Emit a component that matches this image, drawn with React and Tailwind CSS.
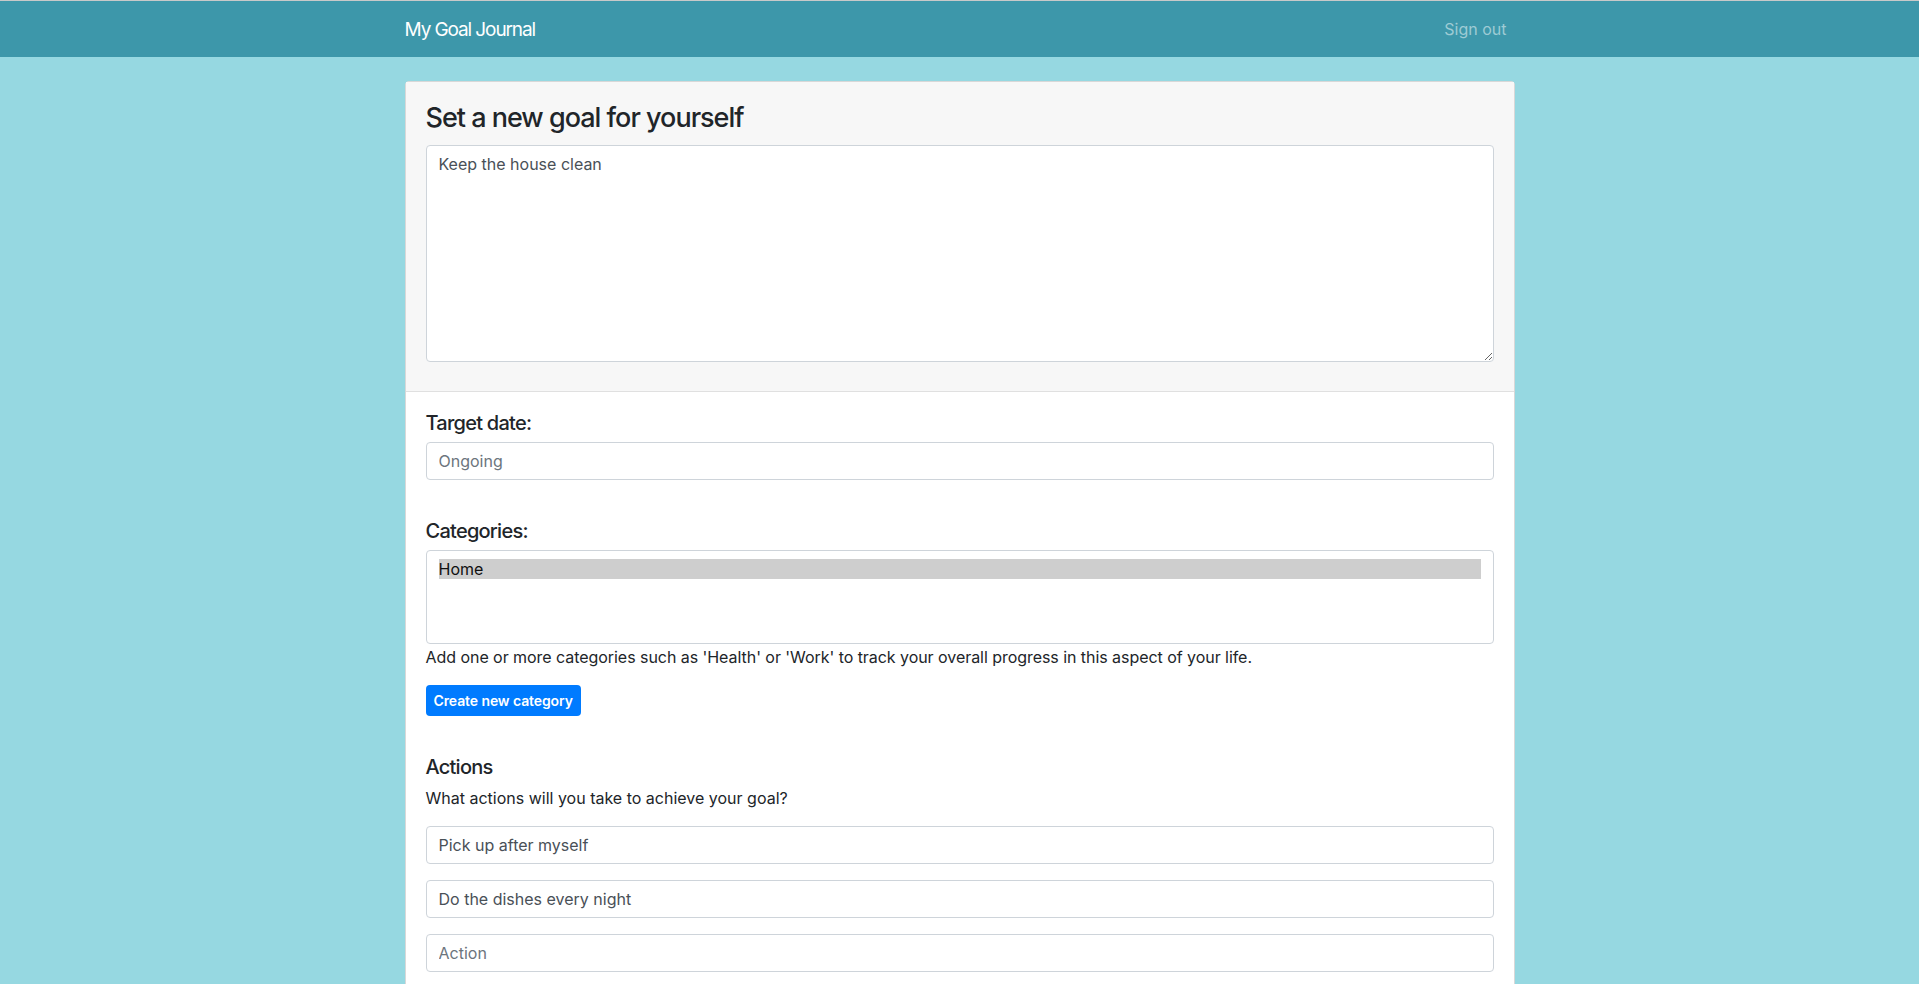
import { useState } from "react";

const FONT = { fontFamily: "Inter, 'Noto Sans', 'Liberation Sans', sans-serif" };

export default function App() {
  const [actions, setActions] = useState(["Pick up after myself", "Do the dishes every night", ""]);

  return (
    <div style={FONT} className="min-h-screen bg-[#96d8e1] text-[#212529]">
      {/* Navbar */}
      <nav className="border-t border-[#c9c9c9] bg-[#3d97aa] h-[57px]">
        <div className="w-[1110px] mx-auto h-full flex items-center justify-between">
          <span className="text-[19px] text-white tracking-[-1.1px] pt-[2px]">My Goal Journal</span>
          <span className="text-[16px] text-[#9ecbd4] pr-2">Sign out</span>
        </div>
      </nav>

      <div className="w-[1110px] mx-auto mt-[24px] bg-white border border-[#d8d8d8] rounded-[4px]">
        {/* Header */}
        <div className="bg-[#f7f7f7] border-b border-[#e0e0e0] px-5 pt-[19px] pb-[29px]">
          <h3 className="text-[27px] leading-[34px] font-medium tracking-[-1px]">
            Set a new goal for yourself
          </h3>
          <textarea
            defaultValue="Keep the house clean"
            className="block w-full mt-[10px] h-[217px] border border-[#ced4da] rounded-[4px] bg-white px-3 py-[6px] text-[16px] leading-6 text-[#495057] outline-none"
          />
        </div>

        {/* Body */}
        <div className="px-5 pt-[19px] pb-10">
          <label className="block text-[20px] leading-6 font-medium tracking-[-0.75px] mb-[7px]">Target date:</label>
          <input
            placeholder="Ongoing"
            className="block w-full h-[38px] border border-[#ced4da] rounded-[4px] px-3 text-[16px] text-[#495057] placeholder:text-[#6c757d] outline-none"
          />

          <label className="block text-[20px] leading-6 font-medium tracking-[-0.75px] mt-[39px] mb-[7px]">Categories:</label>
          <select
            multiple
            defaultValue={["home"]}
            className="block w-full h-[94px] border border-[#ced4da] rounded-[4px] px-3 pt-2 pb-2 text-[16px] text-black outline-none"
          >
            <option value="home">Home</option>
          </select>
          <p className="text-[16px] leading-6 tracking-[-0.05px] mt-[1px]">
            Add one or more categories such as 'Health' or 'Work' to track your overall progress in this aspect of your life.
          </p>
          <button className="mt-4 h-[31px] px-2 rounded-[4px] bg-[#007bff] text-white text-[14px] font-semibold tracking-[-0.1px]">
            Create new category
          </button>

          <h5 className="text-[20px] leading-6 font-medium tracking-[-0.75px] mt-[39px]">Actions</h5>
          <p className="text-[16px] leading-6 mt-[7px]">What actions will you take to achieve your goal?</p>
          <div className="mt-[16px] flex flex-col gap-4">
            {actions.map((a, i) => (
              <input
                key={i}
                value={a}
                placeholder="Action"
                onChange={(e) => {
                  const next = [...actions];
                  next[i] = e.target.value;
                  setActions(next);
                }}
                className="block w-full h-[38px] border border-[#ced4da] rounded-[4px] px-3 text-[16px] text-[#495057] placeholder:text-[#6c757d] outline-none"
              />
            ))}
          </div>
        </div>
      </div>
    </div>
  );
}
